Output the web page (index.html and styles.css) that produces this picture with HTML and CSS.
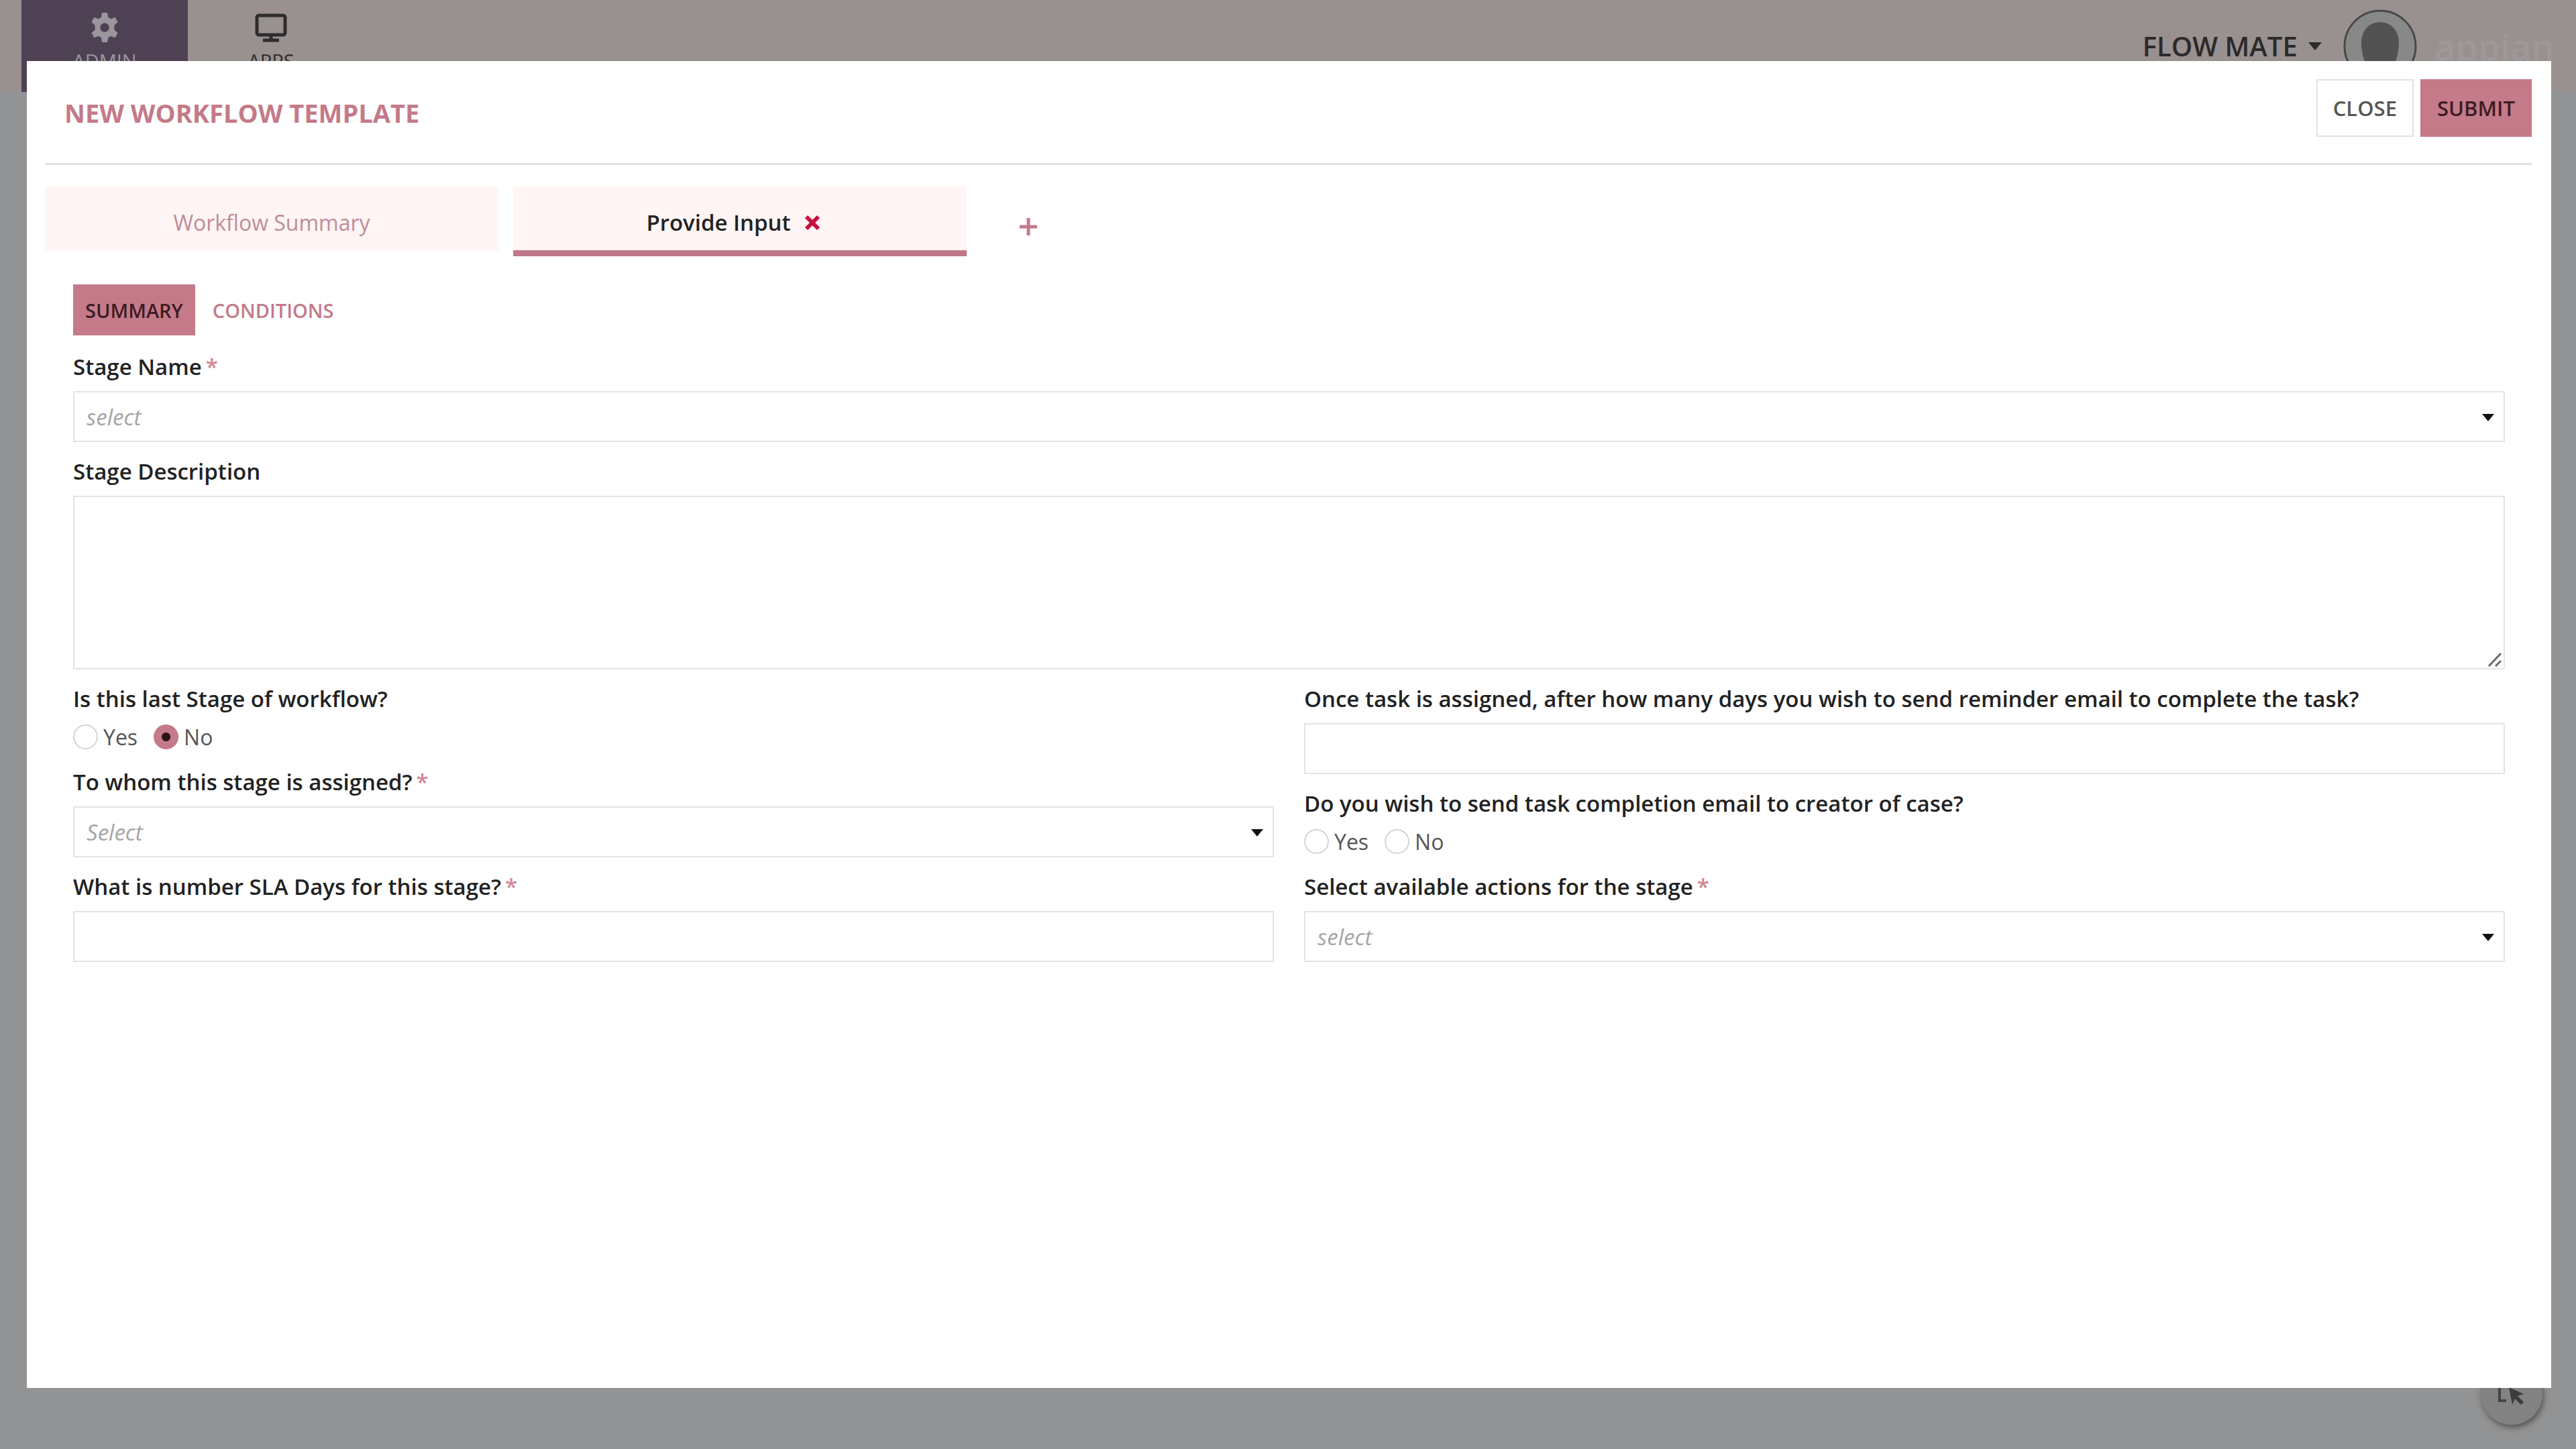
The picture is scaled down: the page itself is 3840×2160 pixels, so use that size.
FILE: index.html
```
<!DOCTYPE html>
<html lang="en">
<head>
  <meta charset="UTF-8">
  <title>New Workflow Template</title>
  <meta name="viewport" content="width=device-width, initial-scale=1.0">
  <link rel="stylesheet" href="styles.css">
</head>
<body>
<header class="topbar">
  <nav class="topnav">
    <a href="#" class="nav-item active">
      <svg width="48" height="48" viewBox="0 0 24 24" fill="currentColor"><path fill-rule="evenodd" d="M10 1h4l.6 3.400 2 1.200 3.200-1.200 2 3.600-2.600 2.200v3.600l2.600 2.200-2 3.600-3.200-1.200-2 1.200L14 23h-4l-.6-3.400-2-1.200-3.200 1.200-2-3.600 2.600-2.200v-3.600L2.200 8l2-3.600 3.200 1.200 2-1.200zM12 8.600a3.400 3.400 0 1 0 0 6.800 3.400 3.400 0 0 0 0-6.800z"/></svg>
      <span>ADMIN</span>
    </a>
    <a href="#" class="nav-item">
      <svg width="48" height="48" viewBox="0 0 48 48" fill="none" stroke="currentColor" stroke-width="5"><rect x="3" y="6" width="42" height="29" rx="3"/><path d="M24 35v7M12 43h24"/></svg>
      <span>APPS</span>
    </a>
  </nav>
  <div class="user">
    <button class="user-menu">FLOW MATE <span class="caret"></span></button>
    <svg class="avatar" width="110" height="110" viewBox="0 0 110 110"><circle cx="55" cy="55" r="53" fill="#878888" stroke="#4a4848" stroke-width="3"/><path d="M55 19c-18 0-28 14-28 31 0 14 4 25 8 37l-4 16h48l-4-16c4-12 8-23 8-37 0-17-10-31-28-31z" fill="#525252"/></svg>
    <span class="brand">appian</span>
  </div>
</header>

<button class="fab" aria-label="Inspect">
  <svg width="48" height="48" viewBox="0 0 48 48"><path d="M16 34H6V8h30v6" fill="none" stroke="#444" stroke-width="4"/><path d="M20 14l22 10-9 3 9 9-4 4-9-9-4 9z" fill="#3c3c3c"/></svg>
</button>

<div class="overlay">
  <form class="modal">
    <div class="modal-header">
      <h1>NEW WORKFLOW TEMPLATE</h1>
      <div class="actions">
        <button type="button" class="btn">CLOSE</button>
        <button type="button" class="btn btn-primary">SUBMIT</button>
      </div>
    </div>

    <div class="tabs">
      <button type="button" class="tab">Workflow Summary</button>
      <button type="button" class="tab active">Provide Input
        <svg width="24" height="24" viewBox="0 0 24 24" stroke="#c9103f" stroke-width="6"><path d="M3 3l18 18M21 3L3 21"/></svg>
      </button>
      <button type="button" class="tab-add" aria-label="Add stage">
        <svg width="26" height="26" viewBox="0 0 26 26" stroke="#c47a88" stroke-width="5"><path d="M13 0v26M0 13h26"/></svg>
      </button>
    </div>

    <div class="content">
      <div class="subtabs">
        <button type="button" class="subtab active">SUMMARY</button>
        <button type="button" class="subtab">CONDITIONS</button>
      </div>

      <div class="field">
        <label for="stage-name">Stage Name<span class="req">*</span></label>
        <div class="select"><select id="stage-name"><option>select</option></select></div>
      </div>
      <div class="field">
        <label for="stage-desc">Stage Description</label>
        <div class="area">
          <textarea id="stage-desc"></textarea>
          <svg class="grip" width="22" height="22" viewBox="0 0 22 22" stroke="#6a6a6a" stroke-width="3"><path d="M2 21L20 2M12 21l8-8"/></svg>
        </div>
      </div>

      <div class="columns">
        <div class="col">
          <fieldset class="field">
            <legend>Is this last Stage of workflow?</legend>
            <div class="radios">
              <label><input type="radio" name="last" value="yes">Yes</label>
              <label><input type="radio" name="last" value="no" checked>No</label>
            </div>
          </fieldset>
          <div class="field">
            <label for="assignee">To whom this stage is assigned?<span class="req">*</span></label>
            <div class="select"><select id="assignee"><option>Select</option></select></div>
          </div>
          <div class="field">
            <label for="sla">What is number SLA Days for this stage?<span class="req">*</span></label>
            <input type="text" id="sla">
          </div>
        </div>
        <div class="col">
          <div class="field">
            <label for="reminder">Once task is assigned, after how many days you wish to send reminder email to complete the task?</label>
            <input type="text" id="reminder">
          </div>
          <fieldset class="field">
            <legend>Do you wish to send task completion email to creator of case?</legend>
            <div class="radios">
              <label><input type="radio" name="notify" value="yes">Yes</label>
              <label><input type="radio" name="notify" value="no">No</label>
            </div>
          </fieldset>
          <div class="field">
            <label for="stage-actions">Select available actions for the stage<span class="req">*</span></label>
            <div class="select"><select id="stage-actions"><option>select</option></select></div>
          </div>
        </div>
      </div>
    </div>
  </form>
</div>
</body>
</html>
```
FILE: styles.css
```
* { box-sizing: border-box; }
body {
  font-family: "Open Sans", "Noto Sans", sans-serif;
  font-size: 32px;
  color: #222;
  background-color: #929394;
  margin: 0;
  min-height: 100vh;
}
button, input, select, textarea {
  font: inherit;
  color: inherit;
  border: 0;
  border-radius: 0;
  margin: 0;
  padding: 0;
  background: none;
}
button { cursor: pointer; }

/* page behind the dialog */
.topbar {
  display: flex;
  justify-content: space-between;
  height: 137px;
  padding: 0 32px;
  background-color: #989190;
}
.topnav { display: flex; }
.nav-item {
  display: flex;
  flex-direction: column;
  align-items: center;
  gap: 6px;
  width: 248px;
  padding-top: 17px;
  font-size: 29px;
  color: #2e2c2c;
  text-decoration: none;
}
.nav-item.active {
  background-color: #4f4154;
  color: #9a969c;
}
.user {
  display: flex;
  align-items: center;
}
.user-menu {
  display: flex;
  align-items: center;
  gap: 16px;
  font-size: 40px;
  font-weight: 600;
  color: #2c2a2a;
}
.caret {
  border: 10px solid transparent;
  border-top: 12px solid #2c2a2a;
  border-bottom: 0;
}
.avatar { margin: 0 26px 0 32px; }
.brand {
  font-size: 54px;
  font-weight: 600;
  color: #9e9898;
}
.fab {
  position: fixed;
  right: 50px;
  bottom: 36px;
  width: 92px;
  height: 92px;
  padding-top: 8px;
  border-radius: 50%;
  background-color: #828282;
  box-shadow: 2px 4px 8px #555;
}

.overlay {
  position: fixed;
  inset: 0;
  padding: 91px 37px 91px 40px;
}
.modal {
  height: 100%;
  padding: 0 29px 0 27px;
  background-color: #fff;
  overflow: auto;
}
.modal-header {
  display: flex;
  justify-content: space-between;
  align-items: flex-start;
  height: 155px;
  padding: 27px 0 0 29px;
  border-bottom: 3px solid #e2e2e2;
}
h1 {
  margin: 0;
  padding-top: 24px;
  font-size: 38px;
  line-height: 52px;
  font-weight: 700;
  color: #c47a88;
}
.actions {
  display: flex;
  gap: 10px;
}
.btn {
  height: 86px;
  padding: 0 23px;
  border: 2px solid #e2e2e2;
  font-size: 31px;
  font-weight: 600;
  color: #555;
}
.btn-primary {
  border-color: #c47a88;
  background-color: #c47a88;
  color: #3c1c24;
}

.tabs {
  display: flex;
  align-items: flex-start;
  gap: 22px;
  padding-top: 32px;
}
.tab {
  display: flex;
  align-items: center;
  justify-content: center;
  gap: 20px;
  width: 676px;
  height: 104px;
  padding-top: 12px;
  border-bottom: 9px solid #fff;
  background-color: #fff5f4;
  color: #c08c98;
}
.tab.active {
  padding-right: 20px;
  border-color: #c07888;
  font-size: 33px;
  font-weight: 600;
  color: #222;
}
.tab-add {
  width: 140px;
  height: 120px;
}

.content { padding: 26px 40px 0 42px; }
.subtabs {
  display: flex;
  margin-bottom: 3px;
}
.subtab {
  height: 76px;
  padding: 0 18px;
  font-size: 29px;
  font-weight: 600;
  color: #c47a88;
}
.subtab + .subtab { padding: 0 26px; }
.subtab.active {
  background-color: #c47a88;
  color: #3c1c24;
}

.field {
  margin: 0;
  padding: 0;
  border: 0;
}
.field > label, legend {
  display: block;
  width: 100%;
  height: 80px;
  padding: 22px 0 0;
  font-size: 33px;
  line-height: 44px;
  font-weight: 600;
}
.req {
  margin-left: 6px;
  color: #cf8894;
}
select, input[type="text"], textarea {
  display: block;
  width: 100%;
  height: 76px;
  padding: 0 18px;
  border: 2px solid #e4e4e4;
  background-color: #fff;
}
select {
  appearance: none;
  font-size: 33px;
  font-style: italic;
  color: #a4a4a4;
}
textarea {
  height: 259px;
  resize: none;
}
.select, .area { position: relative; }
.select::after {
  content: "";
  position: absolute;
  right: 16px;
  top: 34px;
  border: 9px solid transparent;
  border-top: 11px solid #111;
  border-bottom: 0;
  pointer-events: none;
}
.grip {
  position: absolute;
  right: 4px;
  bottom: 4px;
}
.columns {
  display: grid;
  grid-template-columns: 1fr 1fr;
  gap: 45px;
}
.radios {
  display: flex;
  gap: 24px;
  height: 44px;
  padding-bottom: 4px;
  color: #555;
}
.radios label {
  display: flex;
  align-items: center;
  gap: 8px;
}
input[type="radio"] {
  appearance: none;
  width: 37px;
  height: 37px;
  border: 2px solid #d4d4d4;
  border-radius: 50%;
}
input[type="radio"]:checked {
  border-color: #c47a88;
  background: radial-gradient(circle, #2a1218 6px, #c47a88 7px);
}
```
